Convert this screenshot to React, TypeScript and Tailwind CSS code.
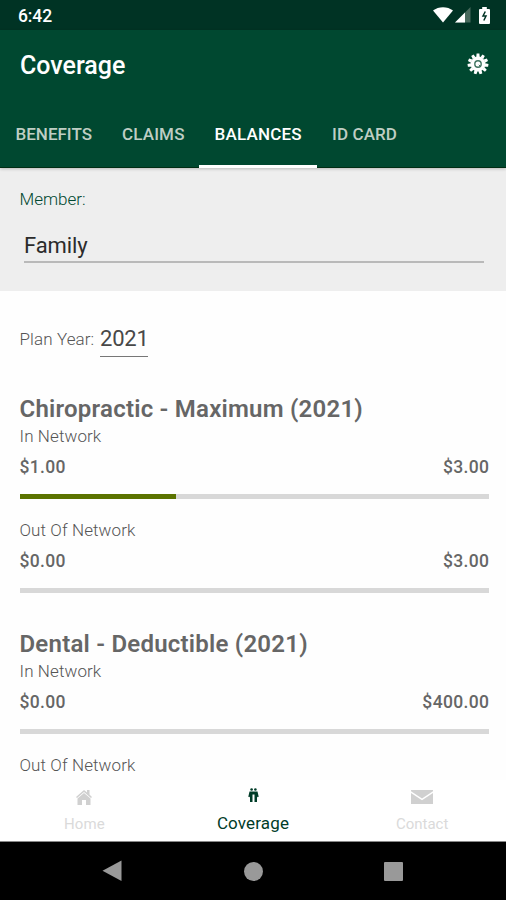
const TEETH = Array.from({ length: 11 }, (_, i) => (i * 360) / 11);

function StatusBar() {
  return (
    <div className="flex h-[30px] items-center bg-[#003324] pl-[18px] pr-[16px] text-white">
      <span className="pt-[2px] text-[17.5px] leading-[30px] font-medium tracking-[-0.1px]">6:42</span>
      <svg className="ml-auto" width="20" height="16" viewBox="0 0 20 16">
        <path d="M0 3.6C5.5-.9 14.500-.9 20 3.600L10 15.500Z" fill="#fff" />
      </svg>
      <svg className="ml-[2px]" width="16" height="16" viewBox="0 0 16 16">
        <path d="M15.500 0V15.500H0Z" fill="#47695c" />
        <path d="M10 5.500V15.500H0Z" fill="#fff" />
      </svg>
      <svg className="ml-[8px]" width="11" height="17" viewBox="0 0 11 17">
        <path d="M3.200 0h4.600v2H10q1 0 1 1v13q0 1-1 1H1q-1 0-1-1V3q0-1 1-1h2.200Z" fill="#fff" />
        <path d="M6.300 4.500 4 9h3L4.800 13.500" fill="none" stroke="#003324" strokeWidth="1.500" />
      </svg>
    </div>
  );
}

function Gear() {
  return (
    <svg className="-mt-[2px]" width="22" height="22" viewBox="-11 -11 22 22">
      <g fill="#fff">
        <circle r="7.400" />
        {TEETH.map((a) => (
          <path key={a} d="M-1.700-7-1.400-10.400H1.400L1.700-7Z" transform={`rotate(${a})`} />
        ))}
      </g>
      <circle r="3.200" fill="none" stroke="#3f7360" strokeWidth="1.400" />
      <path d="M.800.800 3 3" stroke="#3f7360" strokeWidth="1" />
    </svg>
  );
}

function Header() {
  return (
    <header className="relative h-[138px] bg-[#004830] shadow-[0_1px_3px_rgba(0,0,0,0.22)]">
      <div className="flex h-[70px] items-center justify-between pl-5 pr-[17px]">
        <h1 className="pt-[2px] text-[25px] leading-[30px] font-medium text-white">Coverage</h1>
        <Gear />
      </div>
      <nav className="flex h-[68px] border-b border-[#002d13] text-[17px] font-medium text-[#bfcec4]">
        <div className="w-[107px] pl-[15.500px] pt-[22px] leading-6">BENEFITS</div>
        <div className="w-[92px] pl-[15px] pt-[22px] leading-6 tracking-[0.15px]">CLAIMS</div>
        <div className="-mb-px w-[118px] border-b-[3px] border-white pl-[15.500px] pt-[22px] leading-6 tracking-[0.2px] text-white">BALANCES</div>
        <div className="pl-[15px] pt-[22px] leading-6 tracking-[0.1px]">ID CARD</div>
      </nav>
    </header>
  );
}

function Balance({ label, used, total, share = 0 }: { label: string; used: string; total: string; share?: number }) {
  return (
    <div className="h-[94px]">
      <div className="-ml-[0.5px] h-[22px] text-[17px] leading-[22px] font-light tracking-[0.1px] text-[#555]">{label}</div>
      <div className="-ml-[0.5px] mt-[9px] flex h-[22px] justify-between text-[17.5px] leading-[23px] font-medium tracking-[0.35px] text-[#666]">
        <span>{used}</span>
        <span className="-mr-[0.35px]">{total}</span>
      </div>
      <div className="mt-[16px] h-[5px] bg-[#d8d8d8]">
        <div className="h-full bg-[#5b7300]" style={{ width: `${share}%` }} />
      </div>
    </div>
  );
}

export default function App() {
  return (
    <div className="flex h-[900px] w-[506px] flex-col overflow-hidden bg-white font-[Roboto,sans-serif]">
      <StatusBar />
      <Header />
      <section className="h-[123px] bg-[#eee] px-5 pt-[20px]">
        <div className="-ml-[0.5px] text-[17px] leading-[22px] font-light text-[#004830]">Member:</div>
        <div className="ml-1 mr-[2px] mt-[19px] h-[34px] border-b-2 border-[#b9b9b9] text-[22px] leading-[34px] tracking-[-0.1px] text-[#2b2b2b]">Family</div>
      </section>
      <main className="h-[489px] overflow-hidden bg-[#fefefe] pl-5 pr-[17px] pt-[35px]">
        <div className="flex h-[31px]">
          <span className="-ml-[0.5px] w-[80.5px] whitespace-nowrap text-[17px] leading-[26px] font-light tracking-[0.1px] text-[#555]">Plan Year:</span>
          <span className="w-[48px] border-b border-[#777] text-[22px] leading-[26px] tracking-[-0.2px] text-[#484848]">2021</span>
        </div>
        <h2 className="-ml-[0.5px] mt-[37px] h-[31px] text-[24px] leading-[30px] font-semibold tracking-[0.230px] text-[#666]">Chiropractic - Maximum (2021)</h2>
        <Balance label="In Network" used="$1.00" total="$3.00" share={33.3} />
        <Balance label="Out Of Network" used="$0.00" total="$3.00" />
        <h2 className="-ml-[0.5px] mt-[16px] h-[31px] text-[24px] leading-[30px] font-semibold tracking-[0.230px] text-[#666]">Dental - Deductible (2021)</h2>
        <Balance label="In Network" used="$0.00" total="$400.00" />
        <div className="-ml-[0.5px] text-[17px] leading-[22px] font-light tracking-[0.1px] text-[#555]">Out Of Network</div>
      </main>
      <nav className="grid h-[62px] grid-cols-3 border-b border-[#888] bg-white text-center">
        <div className="flex flex-col items-center text-[#d0d0d0]">
          <svg className="mt-[9px]" width="16" height="16" viewBox="0 0 16 16" fill="currentColor">
            <path d="M0 8 8 1l3 2.500V1h2.500v4.500L16 8l-1 1-7-6-7 6Z" />
            <path d="M1.500 9.500 8 4l6.500 5.500V16H10v-5H6v5H1.500Z" />
          </svg>
          <span className="mt-[9px] text-[15px] leading-[20px] tracking-[0.1px] text-[#dadada]">Home</span>
        </div>
        <div className="flex flex-col items-center text-[#003c28]">
          <svg className="ml-px mt-[8px]" width="11" height="15" viewBox="0 0 11 15" fill="currentColor">
            <circle cx="3.600" cy="1.500" r="1.300" />
            <circle cx="7.400" cy="1.500" r="1.300" />
            <path d="M1.500 3.500h8L10.700 8.800l-1.400.4L9 8v6H6.500V6.500H4.500V14H2V8l-.300 1.200L.300 8.800Z" />
          </svg>
          <span className="mt-[9px] text-[17px] leading-[22px] tracking-[0.15px]">Coverage</span>
        </div>
        <div className="flex flex-col items-center text-[#d0d0d0]">
          <svg className="ml-px mt-[10px]" width="22" height="14" viewBox="0 0 22 14" fill="currentColor">
            <path d="M0 0H22V1.200L11 8.400 0 1.200Z" />
            <path d="M0 3 11 10.300 22 3V14H0Z" />
          </svg>
          <span className="ml-px mt-[10px] text-[15px] leading-[20px] text-[#dadada]">Contact</span>
        </div>
      </nav>
      <div className="flex h-[58px] items-center bg-black pl-[102px]">
        <svg width="20" height="22" viewBox="0 0 20 22"><path d="M19.500.500V21L.500 10.800Z" fill="#999" /></svg>
        <div className="ml-[122px] size-[19px] rounded-full bg-[#999]" />
        <div className="ml-[121px] size-[19px] rounded-[1px] bg-[#999]" />
      </div>
    </div>
  );
}
